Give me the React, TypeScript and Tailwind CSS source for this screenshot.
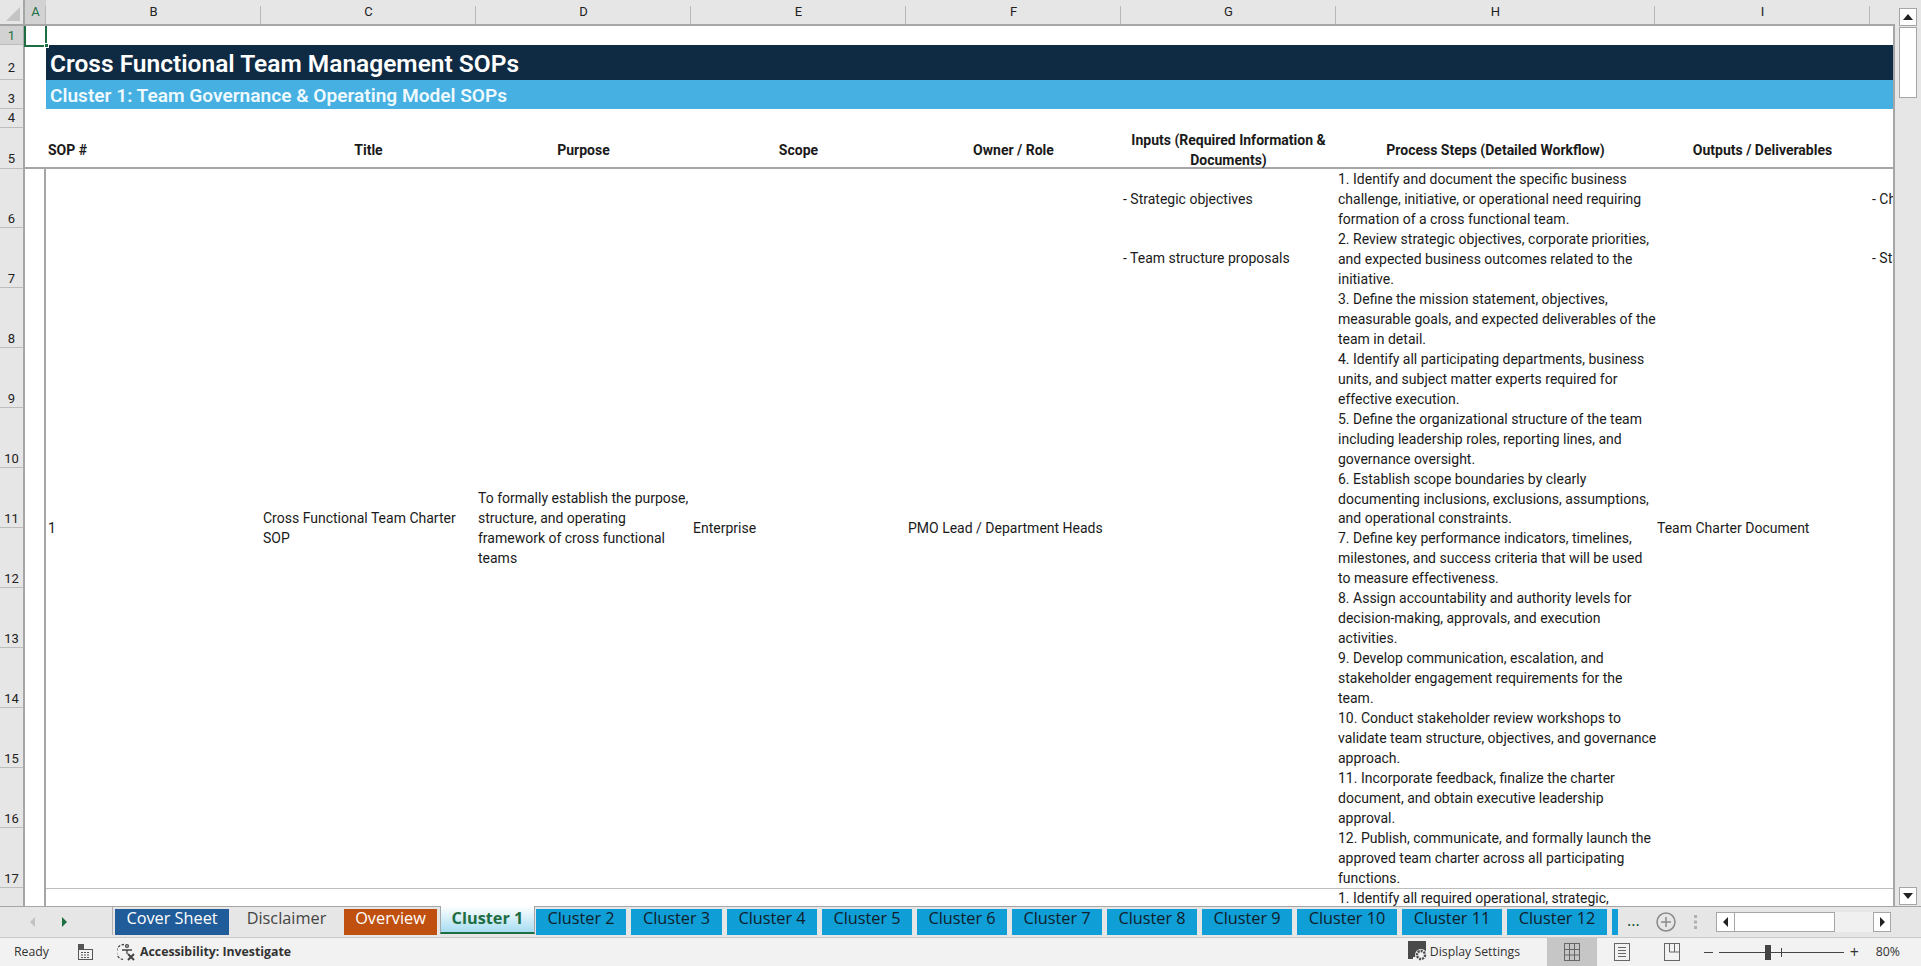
const SHEET_FONT = "font-['Roboto',sans-serif]";
const UI_FONT = "font-['Open_Sans',sans-serif]";

const COLUMNS = [
  { label: "A", w: "w-[21px]", active: true },
  { label: "B", w: "w-[215px]" },
  { label: "C", w: "w-[215px]" },
  { label: "D", w: "w-[215px]" },
  { label: "E", w: "w-[215px]" },
  { label: "F", w: "w-[215px]" },
  { label: "G", w: "w-[215px]" },
  { label: "H", w: "w-[319px]" },
  { label: "I", w: "w-[215px]" },
];

const ROW_HEADERS = [
  { n: 1, h: "h-[19px]", active: true },
  { n: 2, h: "h-[35px] pb-[3px]" },
  { n: 3, h: "h-[29px] pb-px" },
  { n: 4, h: "h-[19px] pb-px" },
  { n: 5, h: "h-[41px] pb-px" },
  { n: 6, h: "h-[59px]" },
  ...[7, 8, 9, 10, 11, 12, 13, 14, 15, 16, 17].map((n) => ({ n, h: "h-[60px]" })),
];

const STEPS = [
  "1. Identify and document the specific business",
  "challenge, initiative, or operational need requiring",
  "formation of a cross functional team.",
  "2. Review strategic objectives, corporate priorities,",
  "and expected business outcomes related to the",
  "initiative.",
  "3. Define the mission statement, objectives,",
  "measurable goals, and expected deliverables of the",
  "team in detail.",
  "4. Identify all participating departments, business",
  "units, and subject matter experts required for",
  "effective execution.",
  "5. Define the organizational structure of the team",
  "including leadership roles, reporting lines, and",
  "governance oversight.",
  "6. Establish scope boundaries by clearly",
  "documenting inclusions, exclusions, assumptions,",
  "and operational constraints.",
  "7. Define key performance indicators, timelines,",
  "milestones, and success criteria that will be used",
  "to measure effectiveness.",
  "8. Assign accountability and authority levels for",
  "decision-making, approvals, and execution",
  "activities.",
  "9. Develop communication, escalation, and",
  "stakeholder engagement requirements for the",
  "team.",
  "10. Conduct stakeholder review workshops to",
  "validate team structure, objectives, and governance",
  "approach.",
  "11. Incorporate feedback, finalize the charter",
  "document, and obtain executive leadership",
  "approval.",
  "12. Publish, communicate, and formally launch the",
  "approved team charter across all participating",
  "functions.",
];

const TABS = [
  { label: "Cover Sheet", cls: "w-[114px] bg-[#1f5c99] text-white" },
  { label: "Disclaimer", cls: "w-[105px] bg-[#e6e6e6] text-[#444444]" },
  { label: "Overview", cls: "w-[93px] bg-[#c0500f] text-white" },
];
const CLUSTERS = [
  { label: "Cluster 2", w: "w-[90px]" },
  { label: "Cluster 3", w: "w-[91px]" },
  { label: "Cluster 4", w: "w-[90px]" },
  { label: "Cluster 5", w: "w-[90px]" },
  { label: "Cluster 6", w: "w-[90px]" },
  { label: "Cluster 7", w: "w-[90px]" },
  { label: "Cluster 8", w: "w-[90px]" },
  { label: "Cluster 9", w: "w-[90px]" },
  { label: "Cluster 10", w: "w-[100px]" },
  { label: "Cluster 11", w: "w-[100px]" },
  { label: "Cluster 12", w: "w-[100px]" },
];

function ColumnHeaders() {
  return (
    <div className="flex h-[26px] shrink-0 border-b-2 border-[#a6a6a6] bg-[#e6e6e6] text-[13px] text-[#222222]">
      <div className="flex w-[25px] shrink-0 items-end justify-end border-r-2 border-[#a6a6a6] pr-[3px] pb-[3px]">
        <svg width="14" height="14" viewBox="0 0 14 14">
          <path d="M14 0V14H0Z" fill="#c4c4c4" />
        </svg>
      </div>
      {COLUMNS.map((c) => (
        <div
          key={c.label}
          className={`relative flex shrink-0 items-center justify-center ${c.w} ${
            c.active ? "bg-[#d2d2d2] text-[#1f6e43]" : ""
          }`}
        >
          {c.label}
          <span className="absolute right-0 bottom-0 h-[18px] w-px bg-[#b8b8b8]" />
        </div>
      ))}
    </div>
  );
}

function RowHeaders() {
  return (
    <div className="flex w-[25px] shrink-0 flex-col border-r-2 border-[#a6a6a6] bg-[#e6e6e6] text-[13px] text-[#222222]">
      {ROW_HEADERS.map((r) => (
        <div
          key={r.n}
          className={`flex shrink-0 items-end justify-center border-b border-[#bdbdbd] leading-[17px] ${r.h} ${
            r.active ? "bg-[#d2d2d2] text-[#1f6e43]" : ""
          }`}
        >
          {r.n}
        </div>
      ))}
    </div>
  );
}

function HeadCell({ cls, children }: any) {
  return (
    <div className={`flex items-center justify-center text-center leading-[20px] font-bold ${cls}`}>
      {children}
    </div>
  );
}

function MidCell({ cls, children }: any) {
  return <div className={`flex items-center px-[2px] leading-[20px] whitespace-nowrap ${cls}`}>{children}</div>;
}

function Sheet() {
  return (
    <div className="flex min-w-0 flex-1 overflow-hidden border-r-2 border-[#a6a6a6] bg-white">
      <RowHeaders />
      <div className="relative flex w-[21px] shrink-0 flex-col">
        {/* col A */}
        <div className="h-[143px] shrink-0 border-b-2 border-[#a6a6a6]" />
        <div className="flex-1 border-r-2 border-[#a6a6a6]" />
        <div className="absolute top-[-2px] left-[-1px] h-[23px] w-[23px] border-2 border-[#1f6e43]" />
        <div className="absolute top-[17px] left-[19px] h-[5px] w-[5px] border border-white bg-[#1f6e43]" />
      </div>
      <div
        className={`grid flex-1 grid-cols-[215px_215px_215px_215px_215px_215px_319px_215px_215px] grid-rows-[19px_35px_29px_19px_41px_59px_repeat(11,60px)_60px] content-start overflow-hidden text-[14px] text-[#1a1a1a] ${SHEET_FONT}`}
      >
        <div className="col-span-9 row-start-2 flex items-center bg-[#0f2a43] pt-[4px] pl-[4px] text-[24.5px] font-semibold text-white">
          Cross Functional Team Management SOPs
        </div>
        <div className="col-span-9 row-start-3 flex items-center bg-[#45b0e1] pt-[3px] pl-[4px] text-[19.1px] font-semibold text-[#eef9fe]">
          Cluster 1: Team Governance &amp; Operating Model SOPs
        </div>

        <HeadCell cls="col-span-9 row-start-5 grid grid-cols-subgrid border-b-2 border-[#a6a6a6] pt-[2px]">
          <div className="self-center pl-[2px] text-left">SOP #</div>
          <div className="self-center">Title</div>
          <div className="self-center">Purpose</div>
          <div className="self-center">Scope</div>
          <div className="self-center">Owner / Role</div>
          <div className="self-center">
            Inputs (Required Information &amp;
            <br />
            Documents)
          </div>
          <div className="self-center">Process Steps (Detailed Workflow)</div>
          <div className="self-center">Outputs / Deliverables</div>
        </HeadCell>

        <MidCell cls="col-start-1 row-span-12 row-start-6 pb-[2px]">1</MidCell>
        <MidCell cls="col-start-2 row-span-12 row-start-6 pb-[2px]">
          <div>
            Cross Functional Team Charter
            <br />
            SOP
          </div>
        </MidCell>
        <MidCell cls="col-start-3 row-span-12 row-start-6 pb-[2px]">
          <div>
            To formally establish the purpose,
            <br />
            structure, and operating
            <br />
            framework of cross functional
            <br />
            teams
          </div>
        </MidCell>
        <MidCell cls="col-start-4 row-span-12 row-start-6 pb-[2px]">Enterprise</MidCell>
        <MidCell cls="col-start-5 row-span-12 row-start-6 pb-[2px]">PMO Lead / Department Heads</MidCell>

        <MidCell cls="col-start-6 row-start-6">- Strategic objectives</MidCell>
        <MidCell cls="col-start-6 row-start-7">- Team structure proposals</MidCell>

        <div className="col-start-7 row-span-12 row-start-6 px-[2px] pt-px leading-[19.97px]">
          {STEPS.map((line) => (
            <div key={line} className="whitespace-nowrap">
              {line}
            </div>
          ))}
        </div>

        <MidCell cls="col-start-8 row-span-12 row-start-6 pb-[2px]">Team Charter Document</MidCell>
        <MidCell cls="col-start-9 row-start-6">- Charter Document</MidCell>
        <MidCell cls="col-start-9 row-start-7">- Stakeholder Register</MidCell>

        <div className="col-span-9 row-start-18 border-t border-[#bdbdbd] px-[2px] pl-[1292px] leading-[19px] whitespace-nowrap">
          1. Identify all required operational, strategic,
        </div>
      </div>
    </div>
  );
}

function Triangle({ dir, cls }: { dir: "up" | "down" | "left" | "right"; cls: string }) {
  const pts = {
    up: "0,8 10,8 5,2",
    down: "0,2 10,2 5,8",
    left: "7,0 7,10 2,5",
    right: "3,0 3,10 8,5",
  }[dir];
  return (
    <svg width="10" height="10" viewBox="0 0 10 10" className={cls}>
      <polygon points={pts} />
    </svg>
  );
}

function VerticalScrollbar() {
  return (
    <div className="flex w-[26px] shrink-0 flex-col items-center bg-[#e6e6e6] pt-[8px] pb-px">
      <div className="flex h-[18px] w-[18px] items-center justify-center border border-[#a6a6a6] bg-white">
        <Triangle dir="up" cls="fill-[#222222]" />
      </div>
      <div className="mt-px h-[71px] w-[18px] border border-[#a6a6a6] bg-white" />
      <div className="flex-1" />
      <div className="flex h-[18px] w-[18px] items-center justify-center border border-[#a6a6a6] bg-white">
        <Triangle dir="down" cls="fill-[#222222]" />
      </div>
    </div>
  );
}

function TabBar() {
  return (
    <div className={`flex h-[32px] shrink-0 items-start border-t border-b border-t-[#a6a6a6] border-b-[#c8c8c8] bg-[#e6e6e6] text-[16.3px] ${UI_FONT}`}>
      <div className="flex h-[29px] w-[112px] shrink-0 items-center pl-[28px]">
        <Triangle dir="left" cls="fill-[#c2c2c2]" />
        <Triangle dir="right" cls="ml-[21px] fill-[#1f6e43]" />
      </div>
      <div className="flex h-[28px] shrink-0 items-start gap-[5px] border-l border-[#b0b0b0] pl-[2px]">
        {TABS.map((t) => (
          <div key={t.label} className={`mt-[2px] flex h-[26px] items-center justify-center pb-[7px] ${t.cls}`}>
            {t.label}
          </div>
        ))}
        <div className="-mt-px -mr-[4px] -ml-[2px] flex h-[28px] w-[95px] items-center justify-center border-x border-b-2 border-x-[#a6a6a6] border-b-[#1f6e43] bg-gradient-to-b from-white to-[#a5dcf1] pb-[2px] font-bold text-[#1f6e43]">
          Cluster 1
        </div>
        {CLUSTERS.map((t) => (
          <div
            key={t.label}
            className={`mt-[2px] flex h-[26px] items-center justify-center bg-[#0f9ed5] pb-[7px] text-[#10202b] ${t.w}`}
          >
            {t.label}
          </div>
        ))}
        <div className="mt-[2px] h-[26px] w-[6px] bg-[#0f9ed5]" />
      </div>
      <div className="ml-[9px] flex h-[29px] shrink-0 items-center">
        <span className="w-[16px] pb-[3px] text-[#14532d]">...</span>
        <svg width="20" height="20" viewBox="0 0 20 20" className="ml-[13px] fill-none stroke-[#8a8a8a] stroke-[1.5]">
          <circle cx="10" cy="10" r="9" />
          <path d="M10 5v10M5 10h10" />
        </svg>
        <svg width="4" height="14" viewBox="0 0 4 14" className="ml-[18px] fill-[#b0b0b0]">
          <rect x="0" y="0" width="3" height="3" />
          <rect x="0" y="5.5" width="3" height="3" />
          <rect x="0" y="11" width="3" height="3" />
        </svg>
        <div className="ml-[18px] flex h-[20px] w-[175px] bg-[#f0f0f0]">
          <div className="flex w-[19px] items-center justify-center border border-[#a6a6a6] bg-white">
            <Triangle dir="left" cls="fill-[#222222]" />
          </div>
          <div className="w-[100px] border-y border-r border-[#a6a6a6] bg-white" />
          <div className="flex-1" />
          <div className="flex w-[18px] items-center justify-center border border-[#a6a6a6] bg-white">
            <Triangle dir="right" cls="fill-[#222222]" />
          </div>
        </div>
      </div>
    </div>
  );
}

function StatusBar() {
  return (
    <div className={`flex min-h-0 flex-1 items-center bg-[#f2f2f2] pr-[21px] text-[12.3px] text-[#333333] ${UI_FONT}`}>
      <span className="ml-[14px] w-[64px]">Ready</span>
      <svg width="15" height="16" viewBox="0 0 15 16" className="fill-none stroke-[#555555]">
        <rect x="0.5" y="5.5" width="14" height="10" />
        <rect x="0" y="0" width="6" height="5" fill="#555555" stroke="none" />
        <path d="M3 8.5h9M3 11h9M3 13.5h9" strokeDasharray="2 1" />
      </svg>
      <svg width="20" height="20" viewBox="0 0 20 20" className="ml-[24px] fill-none stroke-[#444444] stroke-[1.3]">
        <path d="M7 2.5a7.5 7.5 0 0 0 0 15" strokeDasharray="2.5 1.5" />
        <circle cx="10" cy="4" r="1.4" />
        <path d="M5 8h10M10 8v4" />
        <path d="M11 12l6 6M17 12l-6 6" strokeWidth="2" />
      </svg>
      <span className="ml-[3px] font-bold">Accessibility: Investigate</span>
      <div className="flex-1" />
      <svg width="21" height="23" viewBox="0 0 21 23" className="mb-[2px]">
        <path d="M0 1h18v13H12v3H5v2H0z" fill="#4a4a4a" />
        <circle cx="13" cy="15" r="6" fill="#f2f2f2" />
        <circle cx="13" cy="15" r="4" fill="none" stroke="#4a4a4a" strokeWidth="2.4" strokeDasharray="2 1" />
      </svg>
      <span className="ml-px w-[117px]">Display Settings</span>
      <div className="flex h-full w-[50px] items-center justify-center bg-[#c6c6c6]">
        <svg width="16" height="18" viewBox="0 0 16 18" className="fill-none stroke-[#666666]">
          <rect x="0.5" y="0.5" width="15" height="17" />
          <path d="M5.5 0v18M10.5 0v18M0 6.5h16M0 12h16" />
        </svg>
      </div>
      <div className="flex w-[50px] justify-center">
        <svg width="16" height="18" viewBox="0 0 16 18" className="fill-none stroke-[#666666]">
          <rect x="0.5" y="0.5" width="15" height="17" />
          <path d="M4 4.5h8M4 7.5h8M4 10.5h8M4 13.5h8" />
        </svg>
      </div>
      <div className="flex w-[50px] justify-center">
        <svg width="16" height="18" viewBox="0 0 16 18" className="fill-none stroke-[#666666]">
          <rect x="0.5" y="0.5" width="15" height="17" />
          <path d="M5.5 0v9H16M10.5 0v9" />
        </svg>
      </div>
      <div className="ml-[7px] flex w-[160px] items-center gap-[6px]">
        <span className="h-px w-[9px] shrink-0 bg-[#444444]" />
        <div className="relative h-px w-[125px] shrink-0 bg-[#444444]">
          <span className="absolute top-[-7px] left-[46px] h-[15px] w-[6px] bg-[#444444]" />
          <span className="absolute top-[-4px] left-[62px] h-[9px] w-px bg-[#444444]" />
        </div>
        <span className="text-[16px] leading-none">+</span>
      </div>
      <span className="ml-[12px]">80%</span>
    </div>
  );
}

export default function App() {
  return (
    <div className="flex h-[966px] w-[1921px] flex-col overflow-hidden bg-[#e6e6e6]">
      <div className="flex h-[906px] shrink-0">
        <div className={`flex min-w-0 flex-1 flex-col ${SHEET_FONT}`}>
          <ColumnHeaders />
          <Sheet />
        </div>
        <VerticalScrollbar />
      </div>
      <TabBar />
      <StatusBar />
    </div>
  );
}
